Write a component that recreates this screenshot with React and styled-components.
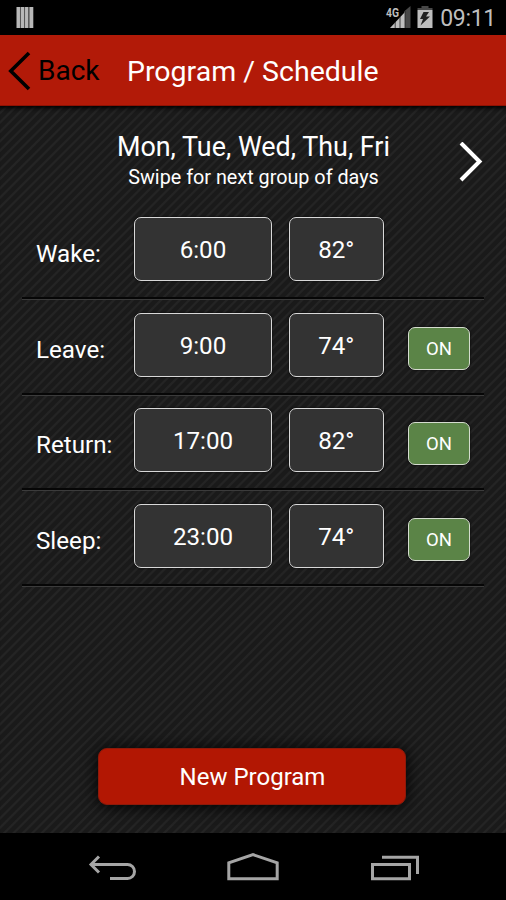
// src/App.jsx
import React from 'react';
import styled, { createGlobalStyle } from 'styled-components';

const GlobalStyle = createGlobalStyle`
  * {
    box-sizing: border-box;
  }

  body {
    margin: 0;
    background: #000;
    font-family: Roboto, "Liberation Sans", sans-serif;
    color: #fff;
  }

  button {
    font-family: inherit;
    color: inherit;
    padding: 0;
  }
`;

const Screen = styled.div`
  display: flex;
  flex-direction: column;
  width: 506px;
  height: 900px;
  overflow: hidden;
`;

const StatusBar = styled.div`
  display: flex;
  align-items: flex-start;
  height: 35px;
  padding: 6px 10px 0 16px;
  background: #000;
`;

const StatusIcons = styled.svg`
  margin-top: -5px;
  margin-left: auto;
  margin-right: 6px;
`;

const Clock = styled.span`
  font-size: 23px;
  line-height: 26px;
  letter-spacing: -0.3px;
  color: #bebebe;
`;

const Header = styled.header`
  display: flex;
  align-items: center;
  flex: none;
  height: 71px;
  padding: 2px 8px 0 8px;
  background: #b21a08;
  border-bottom: 1px solid #8f1204;
`;

const BackButton = styled.button`
  display: flex;
  align-items: center;
  gap: 7px;
  width: 119px;
  border: 0;
  background: none;
  color: #000;
  font-size: 28px;
  line-height: 36px;

  svg {
    margin-top: -1px;
  }
`;

const Title = styled.h1`
  margin: 0;
  padding-top: 2px;
  font-size: 28.5px;
  font-weight: 400;
  line-height: 36px;
  white-space: nowrap;
`;

const Content = styled.main`
  display: flex;
  flex-direction: column;
  flex: none;
  height: 727px;
  box-shadow: inset 0 6px 4px -4px #000;
  background: repeating-linear-gradient(
    135deg,
    #1a1a1a 0,
    #1a1a1a 3.4px,
    #242424 4.4px,
    #242424 5.6px,
    #1a1a1a 6.65px
  );
`;

const DayPicker = styled.div`
  display: flex;
  align-items: center;
  flex: none;
  height: 98.6px;
  padding: 13px 23px 0 48px;
`;

const DayText = styled.div`
  flex: 1;
  text-align: center;
`;

const Days = styled.div`
  font-size: 26.9px;
  line-height: 32px;
  white-space: nowrap;
`;

const Hint = styled.div`
  font-size: 19.8px;
  line-height: 30px;
`;

const Row = styled.div`
  display: flex;
  align-items: flex-start;
  flex: none;
  height: 95.6px;
  margin: 0 22px;
  padding: 12.6px 14px 0;
  border-bottom: 1px solid #3b3b3b;
  box-shadow: inset 0 -2px 0 #060606;
`;

const Label = styled.span`
  width: 98px;
  padding-top: 5px;
  font-size: 24.2px;
  line-height: 64px;
`;

const ValueBox = styled.button`
  width: ${(props) => props.$width}px;
  height: 64px;
  padding-top: 2px;
  margin-right: 16.5px;
  border: 1.5px solid #d8d8d8;
  border-radius: 7px;
  background: #333;
  box-shadow: 0 0 2px #000;
  font-size: 24.2px;
  line-height: 60px;
`;

const Toggle = styled.button`
  width: 62px;
  height: 43px;
  margin: 14px 0 0 7.5px;
  border: 1.5px solid #d5dccf;
  border-radius: 7px;
  background: #5b8447;
  box-shadow: 0 0 2px #000;
  font-size: 18.5px;
  line-height: 42px;
`;

const NewProgramButton = styled.button`
  width: 308px;
  height: 57px;
  padding-left: 1px;
  margin: auto 0 28px 98px;
  border: 1px solid #8e1a0a;
  border-radius: 9px;
  background: #b21703;
  box-shadow: 0 1px 16px #000;
  font-size: 24px;
  line-height: 56px;
`;

const NavBar = styled.nav`
  display: flex;
  flex: 1;
  background: #000;
`;

const schedule = [
  { label: 'Wake:', time: '6:00', temp: '82°' },
  { label: 'Leave:', time: '9:00', temp: '74°', toggle: true },
  { label: 'Return:', time: '17:00', temp: '82°', toggle: true },
  { label: 'Sleep:', time: '23:00', temp: '74°', toggle: true },
];

function Status() {
  return (
    <StatusBar>
      <svg width="19" height="24" fill="#b8b8b8">
        <path d="M.5 1h3.5v21H.5zM4.8 1h3.4v21H4.8zM9 1h3.4v21H9zM13.3 1h4v21h-4z" />
        <path d="M4.4 1v21M8.6 1v21M12.9 1v21" stroke="#777" strokeWidth=".7" />
      </svg>
      <StatusIcons width="49" height="29" viewBox="0 -5 49 29">
        <path d="M19 5.5L25.5 0v22H19z" fill="#484848" />
        <path d="M5 22L20 6v16z" fill="#bebebe" />
        <path d="M10.2 16v6M15 11v11M20 5v17" stroke="#222" strokeWidth=".8" />
        <text x="1" y="10.5" fontSize="13.5" fontWeight="700" textLength="13" lengthAdjust="spacingAndGlyphs" fill="#bebebe">4G</text>
        <path d="M36.5 0h7v3h-7zM32.5 2H47.5v2h-15z" fill="#484848" />
        <path d="M32.5 4h15v18h-15z" fill="#bebebe" />
        <path d="M38.5 6h5.5l-3 4.5h4L35.5 19.5l2.5-6.5h-3z" fill="#222" />
      </StatusIcons>
      <Clock>09:11</Clock>
    </StatusBar>
  );
}

function ScheduleRow({ label, time, temp, toggle }) {
  return (
    <Row>
      <Label>{label}</Label>
      <ValueBox $width={138}>{time}</ValueBox>
      <ValueBox $width={95.5}>{temp}</ValueBox>
      {toggle && <Toggle>ON</Toggle>}
    </Row>
  );
}

export default function App() {
  return (
    <Screen>
      <GlobalStyle />
      <Status />
      <Header>
        <BackButton>
          <svg width="23" height="40" fill="none" stroke="#000" strokeWidth="3.6">
            <path d="M21 2L2.8 20 21 38" />
          </svg>
          Back
        </BackButton>
        <Title>Program / Schedule</Title>
      </Header>
      <Content>
        <DayPicker>
          <DayText>
            <Days>Mon, Tue, Wed, Thu, Fri</Days>
            <Hint>Swipe for next group of days</Hint>
          </DayText>
          <svg width="24" height="40" fill="none" stroke="#fff" strokeWidth="4">
            <path d="M2 1L20.5 19.5 2 38" />
          </svg>
        </DayPicker>
        {schedule.map((item) => (
          <ScheduleRow key={item.label} {...item} />
        ))}
        <NewProgramButton>New Program</NewProgramButton>
      </Content>
      <NavBar>
        <svg width="506" height="67" fill="none" stroke="#a5a5a5" strokeWidth="3">
          <path d="M91 31.5h36.5a6.8 6.8 0 0 1 0 14H110M99 23.5l-8 8 8 8" />
          <path d="M228.8 45.7V29.8L253 21.7l24.2 8.1v15.9z" />
          <path d="M372.5 31.5h37v14.2h-37zM382 24.3h35.5V41" />
        </svg>
      </NavBar>
    </Screen>
  );
}
